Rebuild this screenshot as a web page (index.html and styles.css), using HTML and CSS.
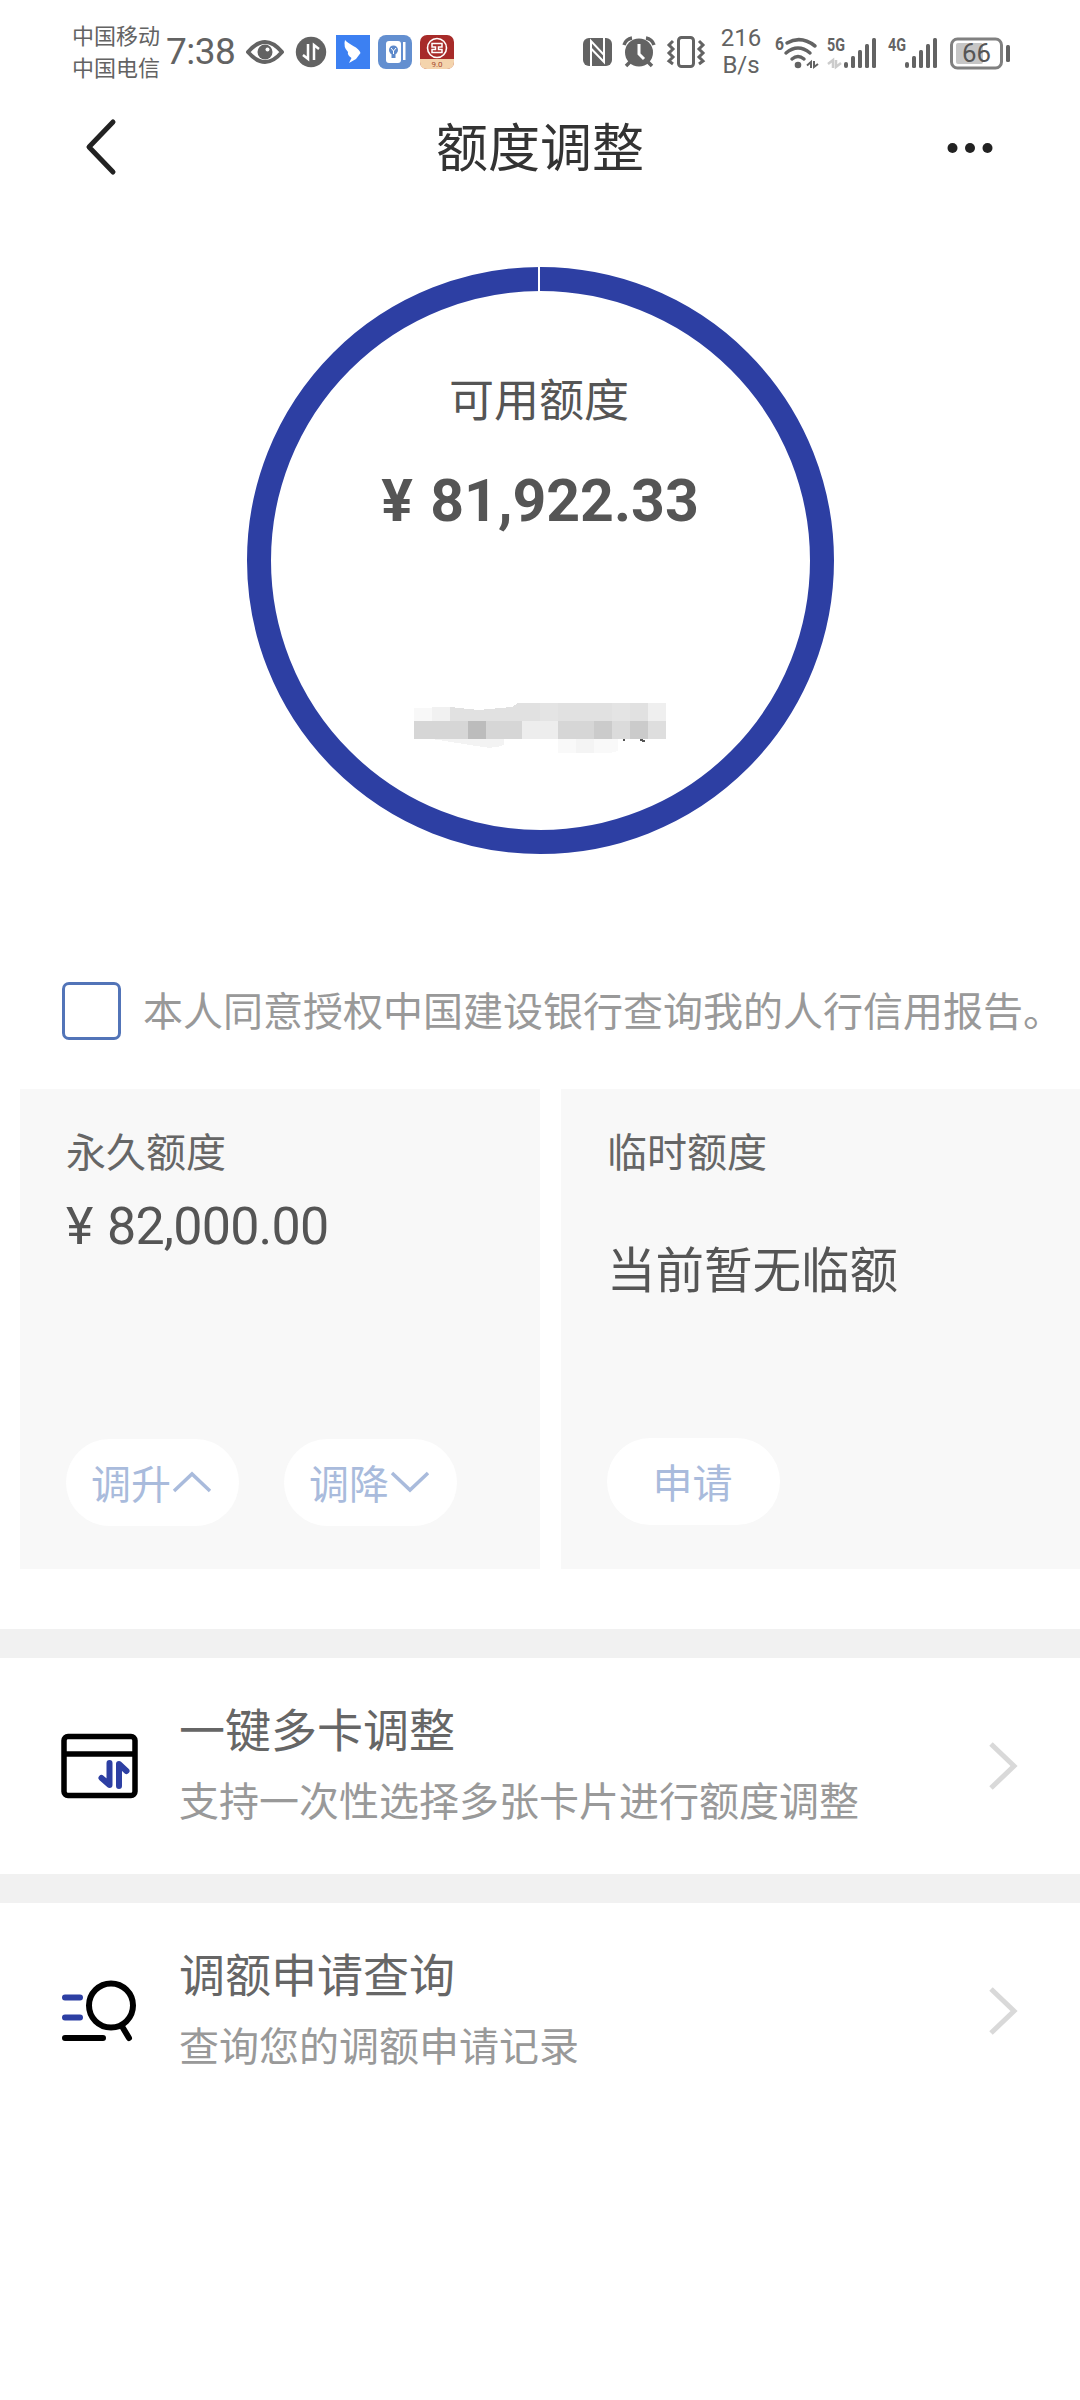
FILE: index.html
```html
<!DOCTYPE html>
<html lang="zh-CN">
<head>
<meta charset="UTF-8">
<title>额度调整</title>
<link rel="stylesheet" href="styles.css">
</head>
<body>
<div class="status">
  <div class="carriers"><span>中国移动</span><span>中国电信</span></div>
  <div class="clock">7:38</div>
  <svg class="status-apps" width="208" height="36" viewBox="0 0 208 36">
    <path d="M2 18Q19-2 36 18Q19 38 2 18Z" fill="none" stroke="#636363" stroke-width="4" stroke-linejoin="round"/>
    <circle cx="19" cy="18" r="7.500" fill="#636363"/><circle cx="21.500" cy="15.500" r="2" fill="#fff"/>
    <circle cx="65" cy="18" r="15.200" fill="#636363"/>
    <path d="M62 10V25L57 21M68 26V11L73 15" fill="none" stroke="#fff" stroke-width="2.500"/>
    <rect x="90" y="1" width="34" height="34" fill="#3c80f2"/>
    <path d="M99 6C103 11 113 13 114.500 19L113 21L110 25L103 29L105.500 24Q101 21 102 18Q97 13 99 6Z" fill="#fff"/>
    <rect x="132" y="1" width="34" height="34" rx="8" fill="#638fd0"/>
    <rect x="140" y="7" width="15" height="22" rx="3" fill="#fff"/><rect x="157" y="8" width="2.500" height="18" fill="#fff"/>
    <circle cx="147.500" cy="16" r="4.500" fill="#5d89ca"/><rect x="145.500" y="20" width="4" height="4" fill="#5d89ca"/><path d="M145 14L147.500 17L150 14M147.500 17V20" stroke="#fff" fill="none"/>
    <rect x="174" y="1" width="34" height="34" rx="7" fill="#a72b29"/>
    <path d="M174 25H208V28Q208 35 201 35H181Q174 35 174 28Z" fill="#f4d4ad"/>
    <circle cx="191" cy="14" r="9.500" fill="none" stroke="#fff" stroke-width="1.600"/>
    <path d="M186 9.500H196V13H192.500V15.500H196V18.500H186V15.500H189.500V13H186Z" fill="none" stroke="#fff" stroke-width="1.500"/>
    <text x="191" y="33" text-anchor="middle" font-size="8" fill="#a54a32">9.0</text>
  </svg>
  <svg class="status-device" width="124" height="36" viewBox="0 0 124 36">
    <rect x="0" y="4" width="29" height="28" rx="6" fill="#636363"/>
    <path d="M8 32V7L21 21V9" fill="none" stroke="#fff" stroke-width="2"/><path d="M8.500 15L21 28V3" fill="none" stroke="#fff" stroke-width="2"/>
    <circle cx="56" cy="18.500" r="14" fill="#636363"/>
    <path d="M41 11Q43 5 49 4M71 11Q69 5 63 4M47 28L43 32M65 28L69 32" fill="none" stroke="#636363" stroke-width="3.500"/>
    <path d="M56 10V20L61 25" fill="none" stroke="#fff" stroke-width="3"/>
    <rect x="95.500" y="3.500" width="15" height="29" rx="3" fill="none" stroke="#636363" stroke-width="3"/>
    <path d="M90 7L86 11L90 15L86 19L90 23L86 27L90 30M116 7L120 11L116 15L120 19L116 23L120 27L116 30" fill="none" stroke="#636363" stroke-width="3"/>
  </svg>
  <div class="speed"><span>216</span><span>B/s</span></div>
  <svg class="status-net" width="236" height="40" viewBox="0 0 236 40">
    <g fill="#636363" font-weight="700">
      <text x="0" y="18" font-size="18" textLength="9" lengthAdjust="spacingAndGlyphs">6</text>
      <text x="52" y="19" font-size="18" textLength="18" lengthAdjust="spacingAndGlyphs">5G</text>
      <text x="113" y="19" font-size="18" textLength="18" lengthAdjust="spacingAndGlyphs">4G</text>
      <circle cx="23" cy="33" r="3.300"/>
      <rect x="69" y="30" width="4" height="6" rx="2"/><rect x="76" y="24" width="4" height="12" rx="1.500"/><rect x="83" y="18" width="4" height="18" rx="1.500"/><rect x="90" y="12" width="4" height="24" rx="1.500"/><rect x="97" y="6" width="4" height="30" rx="1.500"/>
      <rect x="130" y="30" width="4" height="6" rx="2"/><rect x="137" y="24" width="4" height="12" rx="1.500"/><rect x="144" y="18" width="4" height="18" rx="1.500"/><rect x="151" y="12" width="4" height="24" rx="1.500"/><rect x="158" y="6" width="4" height="30" rx="1.500"/>
      <rect x="231" y="13" width="4" height="17" rx="1.500"/>
    </g>
    <path d="M12 11Q26 3 40 14M11 21Q23 11 35 21M17 27Q23 22 29 27" fill="none" stroke="#636363" stroke-width="3.500" stroke-linecap="round"/>
    <path d="M36 36V30L32 33.500M39 29V35L43 32" fill="none" stroke="#636363" stroke-width="2"/>
    <path d="M58 36V28L53 32M61 28V35L66 31" fill="none" stroke="#ccc" stroke-width="2.500"/>
    <rect x="176.500" y="7" width="50" height="29" rx="6" fill="none" stroke="#808080" stroke-width="3"/>
    <rect x="181" y="11" width="27" height="21" rx="2" fill="#c6c6c6"/>
    <text x="187" y="30" font-size="25" textLength="29" lengthAdjust="spacingAndGlyphs" fill="#555">66</text>
  </svg>
</div>

<header class="nav">
  <svg width="36" height="60" viewBox="0 0 36 60"><path d="M31 5L7 30L31 55" fill="none" stroke="#222" stroke-width="5" stroke-linecap="round" stroke-linejoin="round"/></svg>
  <h1>额度调整</h1>
  <svg width="48" height="12" viewBox="0 0 48 12" fill="#222"><circle cx="6.500" cy="7" r="5"/><circle cx="24" cy="7" r="5"/><circle cx="41.500" cy="7" r="5"/></svg>
</header>

<section class="gauge">
  <div class="ring">
    <i class="tick"></i>
    <div class="ring-label">可用额度</div>
    <div class="ring-value"><span class="yen">¥</span><span>81,922.33</span></div>
    <svg class="mosaic" width="324" height="60" viewBox="0 0 324 60" shape-rendering="crispEdges">
      <path d="M54 46H126V52Q116 56 105 54Z" fill="#f3f3f3"/>
      <path d="M180 46H240V58Q235 60 228 60H180Z" fill="#f9f9f9"/><rect x="198" y="46" width="18" height="14" fill="#f4f4f4"/>
      <rect x="36" y="15" width="18" height="14" fill="#f8f8f8"/><rect x="54" y="14" width="18" height="15" fill="#f1f1f1"/>
      <path d="M72 14L101 17L134 14L140 10H270V28H72Z" fill="#e1e1e1"/>
      <rect x="162" y="10" width="18" height="18" fill="#e4e4e4"/><rect x="234" y="10" width="18" height="18" fill="#e4e4e4"/><rect x="270" y="10" width="18" height="18" fill="#efefef"/>
      <path d="M36 28H288V46H36Z" fill="#d6d6d6"/>
      <rect x="90" y="28" width="18" height="18" fill="#bcbcbc"/><rect x="144" y="28" width="36" height="18" fill="#ededed"/><rect x="216" y="28" width="18" height="18" fill="#cbcbcb"/><rect x="234" y="28" width="18" height="18" fill="#dbdbdb"/><rect x="252" y="28" width="18" height="18" fill="#cbcbcb"/><rect x="270" y="28" width="18" height="18" fill="#dedede"/>
      <path d="M246 46V48M262 47L267 48" stroke="#555" stroke-width="2"/>
    </svg>
  </div>
</section>

<label class="agree"><span class="box"></span><span class="agree-text">本人同意授权中国建设银行查询我的人行信用报告。</span></label>

<section class="cards">
  <div class="card">
    <h2>永久额度</h2>
    <div class="amount"><span class="yen">¥</span><span>82,000.00</span></div>
    <div class="actions">
      <button>调升<svg width="40" height="24" viewBox="0 0 40 24"><path d="M2 21L20 4L38 21" fill="none" stroke="#a9bbdc" stroke-width="3.500"/></svg></button>
      <button>调降<svg width="40" height="24" viewBox="0 0 40 24"><path d="M2 3L20 20L38 3" fill="none" stroke="#a9bbdc" stroke-width="3.500"/></svg></button>
    </div>
  </div>
  <div class="card">
    <h2>临时额度</h2>
    <div class="none">当前暂无临额</div>
    <div class="actions raised"><button>申请</button></div>
  </div>
</section>

<a class="entry">
  <svg class="entry-icon" width="80" height="70" viewBox="0 0 80 70">
    <rect x="4" y="5.500" width="71" height="59" rx="4" fill="none" stroke="#000" stroke-width="5.500"/><path d="M4 23H75" stroke="#000" stroke-width="5.500"/>
    <path d="M49.500 32V54L41.500 47M59 55V33L66.500 40" fill="none" stroke="#2d3fa3" stroke-width="6" stroke-linecap="round" stroke-linejoin="round"/>
  </svg>
  <div class="entry-text"><h3>一键多卡调整</h3><p>支持一次性选择多张卡片进行额度调整</p></div>
  <svg width="30" height="52" viewBox="0 0 30 52"><path d="M3 4L26 26L3 48" fill="none" stroke="#d9d9d9" stroke-width="5"/></svg>
</a>
<a class="entry">
  <svg class="entry-icon" width="80" height="70" viewBox="0 0 80 70">
    <path d="M5 21.500H20M5 41.500H20" stroke="#2d3fa3" stroke-width="6" stroke-linecap="round"/>
    <path d="M5 62H43M63 52L69 62" stroke="#000" stroke-width="6" stroke-linecap="round"/>
    <circle cx="51" cy="29.500" r="22" fill="none" stroke="#000" stroke-width="6"/>
  </svg>
  <div class="entry-text"><h3>调额申请查询</h3><p>查询您的调额申请记录</p></div>
  <svg width="30" height="52" viewBox="0 0 30 52"><path d="M3 4L26 26L3 48" fill="none" stroke="#d9d9d9" stroke-width="5"/></svg>
</a>
</body>
</html>
```
FILE: styles.css
```css
* { box-sizing: border-box; margin: 0; padding: 0; }
body {
  width: 1080px;
  min-height: 2400px;
  background: #fff;
  color: #555;
  font-family: Roboto, "Noto Sans CJK SC", sans-serif;
}
h1, h2, h3 { font-weight: 400; }
svg { display: block; flex: none; }

.status { display: flex; align-items: center; height: 104px; padding-left: 72px; color: #636363; }
.carriers { display: flex; flex-direction: column; width: 94px; padding-top: 2px; font-size: 22px; line-height: 32px; }
.clock { width: 80px; font-size: 37px; line-height: 40px; letter-spacing: -0.5px; }
.status-device { margin-left: 129px; }
.speed { display: flex; flex-direction: column; align-items: center; width: 46px; margin-left: 11px; font-size: 24px; line-height: 27px; }
.status-net { margin-left: 11px; }

.nav { display: flex; align-items: center; justify-content: space-between; height: 86px; padding: 0 86px 0 82px; }
.nav h1 { padding: 5px 0 0 16px; font-size: 52px; line-height: 80px; color: #333; }

.gauge { display: flex; justify-content: center; padding-top: 77px; }
.ring {
  display: flex; flex-direction: column; align-items: center;
  position: relative;
  width: 587px; height: 587px;
  border: 24.500px solid #2d3fa3;
  border-radius: 50%;
}
.tick { position: absolute; top: -25px; left: 267.500px; width: 2px; height: 26px; background: #fff; }
.ring-label { margin: 78px 2px 0 0; font-size: 45px; line-height: 66px; }
.ring-value { display: flex; margin-top: 30px; font-size: 59px; line-height: 72px; font-weight: 700; }
.ring-value .yen { width: 49px; }
.mosaic { margin-top: 156px; }

.agree { display: flex; align-items: center; height: 60px; margin-top: 127px; padding-left: 62px; gap: 22px; font-size: 40px; line-height: 58px; color: #999; white-space: nowrap; }
.agree-text { padding-top: 3px; }
.box { width: 59px; height: 58px; border: 3px solid #5274b8; border-radius: 7px; }

.cards { display: grid; grid-template-columns: 520px 519px; gap: 21px; margin-top: 48px; padding-left: 20px; }
.card { display: flex; flex-direction: column; height: 480px; padding: 35px 46px 43px; background: #f8f8f8; }
.card h2 { font-size: 40px; line-height: 60px; color: #666; }
.amount { display: flex; margin-top: 11px; font-size: 52px; line-height: 64px; letter-spacing: -0.8px; }
.amount .yen { width: 41px; }
.none { margin-top: 53px; font-size: 48.500px; line-height: 70px; }
.actions { display: flex; gap: 45px; margin-top: auto; }
.raised { margin-bottom: 1px; }
button {
  display: flex; align-items: center; justify-content: center; gap: 1px;
  width: 173px; height: 87px;
  padding: 0 2px 2px 0;
  border: 0; border-radius: 44px;
  background: #fff; color: #a9bbdc;
  font: 400 40px/60px "Noto Sans CJK SC", sans-serif;
}

.entry { display: flex; align-items: center; height: 245px; border-top: 29px solid #f1f1f1; padding: 0 62px 0 60px; }
.cards + .entry { margin-top: 60px; }
.entry-icon { margin-right: 39px; }
.entry-text { flex: 1; padding-top: 2px; }
.entry h3 { font-size: 46px; line-height: 72px; color: #666; }
.entry p { font-size: 40px; line-height: 72px; color: #999; }
```
